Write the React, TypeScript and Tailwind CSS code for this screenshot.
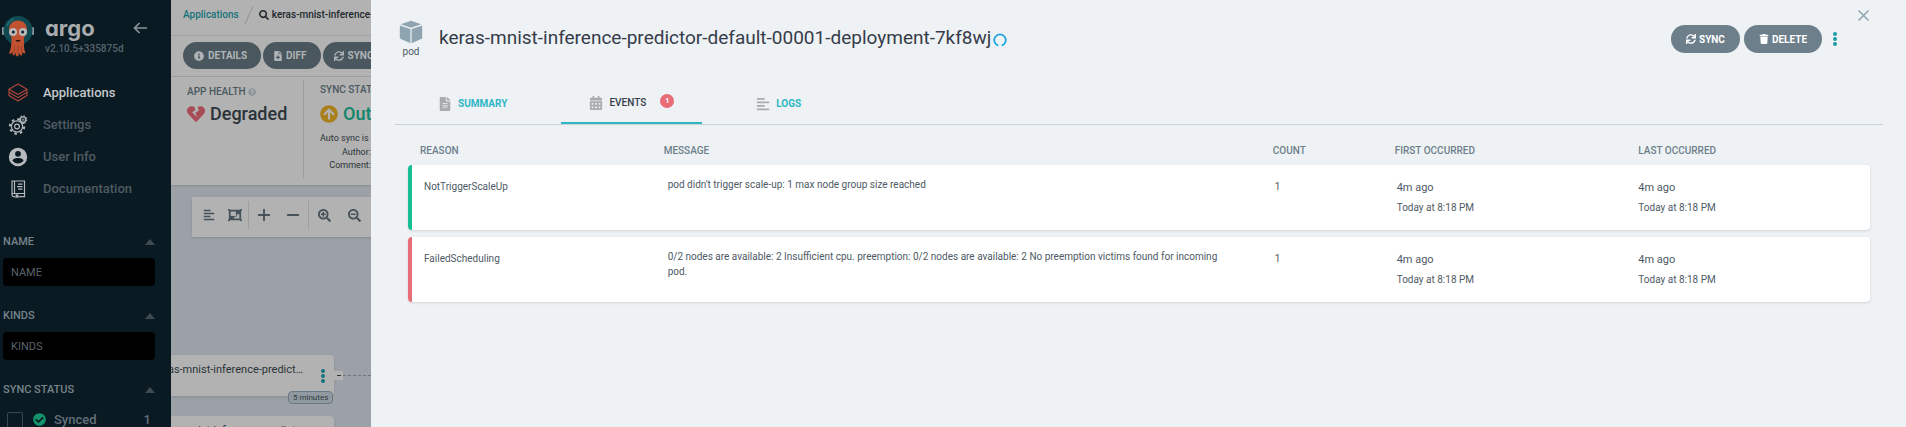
import React from 'react';
import { Minus, Plus } from 'lucide-react';
import {
  FaAlignLeft,
  FaArrowCircleUp,
  FaCalendarAlt,
  FaCheckCircle,
  FaFileAlt,
  FaFileMedical,
  FaHeartBroken,
  FaInfoCircle,
  FaObjectGroup,
  FaQuestionCircle,
  FaSearch,
  FaSearchMinus,
  FaSearchPlus,
  FaSync,
  FaTrash,
} from 'react-icons/fa';

function ArgoLogo() {
  return (
    <svg viewBox="0 0 32 42" className="h-[42px] w-8 shrink-0" aria-hidden="true">
      <rect x="0" y="12" width="2" height="8" rx="1" fill="#8f9aa0" />
      <rect x="30" y="12" width="2" height="8" rx="1" fill="#8f9aa0" />
      <circle cx="16" cy="15.500" r="14.500" fill="#0f4a53" />
      <path d="M5 11a12 12 0 0 1 7-7" stroke="#2a6a72" strokeWidth="1.500" fill="none" />
      <path
        d="M16 5.500c-5.500 0-9 4-9 9 0 4 2.500 6 2.500 10 0 5-.5 9-2.500 14 2 .8 3-.5 3.500-2 0 1.500 0 3 .6 4 1.400 0 2-1.500 2.100-3 .4 1.500.8 3.500 2 4 1.400-.4 1.700-2 2-3.500.4 1.300 1 2.700 2.300 2.700.8-1 .8-2.700.7-4 .8 1.300 2 2.300 3.300 1.300-2-4-1.500-8.500-1.500-13.500 0-4 3-6 3-10 0-5-3.500-9-9-9z"
        fill="#c05232"
      />
      <path d="M12.500 31v6M16 31v8M19.500 31v6" stroke="#8f3a25" strokeWidth=".7" />
      <circle cx="11" cy="17" r="4" fill="#b9b9b9" />
      <circle cx="21" cy="17" r="4" fill="#b9b9b9" />
      <circle cx="11.300" cy="17" r="1.500" fill="#14212b" />
      <circle cx="20.700" cy="17" r="1.500" fill="#14212b" />
      <path d="M13.500 25h5c-.3 2.200-4.700 2.200-5 0z" fill="#2b1514" />
    </svg>
  );
}

function LayersIcon() {
  return (
    <svg viewBox="0 0 20 20" className="size-5" fill="none" stroke="#b5483c" strokeWidth="1.100" strokeLinejoin="round">
      <path d="M10 1 19 6.300 10 11.500 1 6.300z" />
      <path d="M1 6.300v3L10 14.600l9-5.300v-3" />
      <path d="M1 9.300v3.200L10 18l9-5.500V9.300" />
    </svg>
  );
}

function GearsIcon() {
  return (
    <svg viewBox="0 0 20 20" className="size-5" fill="none" stroke="#b4b8ba">
      <circle cx="9" cy="11.500" r="5.600" strokeWidth="1.200" />
      <circle cx="9" cy="11.500" r="7.200" strokeWidth="2" strokeDasharray="2.600 3.055" />
      <circle cx="9" cy="11.500" r="2.400" strokeWidth="1.200" />
      <circle cx="15" cy="4.600" r="2.700" fill="#0a1a22" strokeWidth="1.100" />
      <circle cx="15" cy="4.600" r="3.700" strokeWidth="1.200" strokeDasharray="1.400 1.506" />
      <circle cx="15" cy="4.600" r=".8" strokeWidth=".8" />
    </svg>
  );
}

function UserIcon() {
  return (
    <svg viewBox="0 0 20 20" className="size-5">
      <circle cx="10" cy="10" r="9.200" fill="#b8bbbd" />
      <circle cx="10" cy="6.800" r="2.900" fill="#0a1a22" />
      <path d="M4.400 13.600c1-2 3.300-2.600 5.600-2.600s4.600.6 5.600 2.600a6.700 6.700 0 0 1-11.200 0z" fill="#0a1a22" />
    </svg>
  );
}

function DocsIcon() {
  return (
    <svg viewBox="0 0 20 20" className="size-5" fill="none" stroke="#b4b8ba" strokeWidth="1.200">
      <path d="M4 2h12.500v12.500H5.500A1.500 1.500 0 0 0 4 16z" />
      <path d="M4 16a1.700 1.700 0 0 0 1.500 1.700H7m4 0h5.500v-3.200M6.500 2v12.500" />
      <path d="M7.500 15.500h3v4L9 18.300l-1.500 1.200z" fill="#b4b8ba" stroke="none" />
      <path d="M10 5.200h4.500M9 7.700h5.500M10 10.200h4.500" strokeWidth="1.300" />
    </svg>
  );
}

function PodIcon() {
  return (
    <svg viewBox="0 0 24 24" className="size-6" fill="#8fa4b1">
      <path d="M12 .8 22.300 4.300 12 7.800 1.700 4.300z" />
      <path d="M.8 5.600 11.400 9.100V23.300L.8 18.600z" />
      <path d="M23.200 5.600 12.600 9.100V23.300l10.600-4.700z" />
    </svg>
  );
}

function Dots({ color }: { color: string }) {
  return (
    <svg viewBox="0 0 4 14" className="h-3.5 w-1" fill={color} aria-hidden="true">
      <circle cx="2" cy="2" r="2" />
      <circle cx="2" cy="7" r="2" />
      <circle cx="2" cy="12" r="2" />
    </svg>
  );
}

const navItems = [
  { label: 'Applications', icon: <LayersIcon />, active: true },
  { label: 'Settings', icon: <GearsIcon />, active: false },
  { label: 'User Info', icon: <UserIcon />, active: false },
  { label: 'Documentation', icon: <DocsIcon />, active: false },
];

function FilterHeading({ children }: { children: React.ReactNode }) {
  return (
    <div className="flex h-4 items-center justify-between text-[11px] font-medium text-[#76838b]">
      {children}
      <svg viewBox="0 0 10 6" className="h-1.5 w-2.5" fill="#3f4a52" aria-hidden="true">
        <path d="M5 0 10 6H0z" />
      </svg>
    </div>
  );
}

function Filter({ label }: { label: string }) {
  return (
    <div className="flex flex-col gap-2">
      <FilterHeading>
        <label htmlFor={'filter-' + label}>{label}</label>
      </FilterHeading>
      <input
        id={'filter-' + label}
        placeholder={label}
        className="h-7 w-full rounded bg-black px-2 text-[11px] text-[#5b646b] placeholder:text-[#5b646b]"
      />
    </div>
  );
}

function Sidebar() {
  return (
    <aside className="flex w-[171px] shrink-0 flex-col overflow-hidden bg-[#0a1a22]">
      <div className="flex items-start pt-[15px] pl-0.5">
        <ArgoLogo />
        <div className="flex flex-1 flex-col pl-[11px]">
          <div className="flex items-center justify-between pr-6">
            <span className="font-[Inter] text-[22px] leading-[26px] font-bold text-[#a9acae] [font-feature-settings:'cv11']">
              argo
            </span>
            <button type="button" aria-label="Collapse sidebar">
              <svg viewBox="0 0 14 12" className="h-3 w-3.5" fill="none" stroke="#8c9296" strokeWidth="1.700">
                <path d="M14 6H1.500M6.500 1 1.500 6l5 5" />
              </svg>
            </button>
          </div>
          <span className="pt-0.5 text-[10px] leading-3 font-medium text-[#55636c]">v2.10.5+335875d</span>
        </div>
      </div>
      <nav className="flex flex-col pt-5">
        {navItems.map((item) => (
          <a
            key={item.label}
            href="#"
            className={
              item.active
                ? 'flex h-8 items-center gap-[15px] pl-2 text-[13px] font-medium text-[#c4c8ca]'
                : 'flex h-8 items-center gap-[15px] pl-2 text-[13px] font-medium text-[#4f5b63]'
            }
          >
            {item.icon}
            {item.label}
          </a>
        ))}
      </nav>
      <div className="flex flex-col gap-[22px] pt-[29px] pr-4 pl-[3px]">
        <Filter label="NAME" />
        <Filter label="KINDS" />
        <div className="flex flex-col gap-3">
          <FilterHeading>SYNC STATUS</FilterHeading>
          <label className="flex items-center pr-1 pl-1 text-[13px] font-medium text-[#63707a]">
            <input type="checkbox" className="size-4 appearance-none rounded-xs border border-[#3a464e]" />
            <FaCheckCircle className="mr-2 ml-2.5 size-[13px] text-[#14936b]" />
            <span className="flex-1">Synced</span>
            <span>1</span>
          </label>
        </div>
      </div>
    </aside>
  );
}

function ToolbarButton({ icon, children }: { icon: React.ReactNode; children: React.ReactNode }) {
  return (
    <button
      type="button"
      className="flex h-[27px] shrink-0 items-center gap-1 rounded-full bg-[#4a575f] pr-3.5 pl-[11px] text-[10px] font-bold text-[#b0b4b6]"
    >
      {icon}
      {children}
    </button>
  );
}

function ResourceNode() {
  return (
    <div className="flex h-[41px] w-[163px] shrink-0 items-center justify-between rounded-r bg-[#b2b2b2] pr-[9px] shadow">
      <div className="flex w-[132px] justify-end pb-3 text-[11px] leading-4 text-[#2b3339]">
        keras-mnist-inference-predict…
      </div>
      <button type="button" aria-label="Resource actions">
        <Dots color="#13757c" />
      </button>
    </div>
  );
}

function ApplicationView() {
  return (
    <main className="flex w-[200px] shrink-0 flex-col overflow-hidden bg-[#9ba1a6] whitespace-nowrap">
      <div className="flex h-9 shrink-0 items-center border-b border-[#9fa2a4] bg-[#b2b2b2] pb-1.5 pl-3 text-[10px] font-medium">
        <a href="#" className="text-[#17737b]">
          Applications
        </a>
        <svg viewBox="0 0 10 18" className="mx-1 h-[18px] w-3 shrink-0" stroke="#8d9499" aria-hidden="true">
          <path d="M9 0 1 18" />
        </svg>
        <span className="flex items-center gap-[3px] text-[#22292e]">
          <FaSearch className="size-2.5" />
          keras-mnist-inference-predictor
        </span>
      </div>
      <div className="flex h-[41px] shrink-0 items-center gap-0.5 border-b border-[#9fa2a4] bg-[#b2b2b2] pb-px pl-3">
        <ToolbarButton icon={<FaInfoCircle className="size-2.5" />}>DETAILS</ToolbarButton>
        <ToolbarButton icon={<FaFileMedical className="h-2.5 w-2" />}>DIFF</ToolbarButton>
        <ToolbarButton icon={<FaSync className="size-2.5" />}>SYNC</ToolbarButton>
      </div>
      <div className="flex h-[108px] shrink-0 bg-[#b2b2b2] pt-[3px] pb-1.5 pl-4 shadow">
        <div className="flex w-[117px] shrink-0 flex-col border-r border-[#989ea3] pt-1.5">
          <div className="flex items-center gap-0.5 text-[10px] leading-3 font-medium text-[#4a5860]">
            APP HEALTH <FaQuestionCircle className="size-2 text-[#8b959c]" />
          </div>
          <div className="flex items-center gap-[5px] pt-1 text-[18px] leading-6 font-medium text-[#2b3339]">
            <FaHeartBroken className="size-[18px] text-[#a84c57]" />
            Degraded
          </div>
        </div>
        <div className="flex flex-col pt-1 pl-4">
          <div className="text-[10px] leading-3 font-medium text-[#4a5860]">SYNC STATUS</div>
          <div className="flex items-center gap-[5px] pt-1.5 text-[18px] leading-6 font-medium text-[#12856a]">
            <FaArrowCircleUp className="size-[18px] text-[#aa7f1c]" />
            OutOfSync
          </div>
          <div className="pt-1 text-[9px] leading-4 text-[#2b3339]">Auto sync is enabled.</div>
          <div className="flex w-[51px] flex-col items-end text-[9px] leading-[13px] text-[#2b3339]">
            <span>Author:</span>
            <span>Comment:</span>
          </div>
        </div>
      </div>
      <div className="mt-3 ml-[21px] flex h-10 w-60 shrink-0 items-stretch bg-[#b2b2b2] pt-1 pb-2 text-[#46525a] shadow">
        <div className="flex w-[57px] shrink-0 items-center justify-around border-r border-[#989ea3] pl-1">
          <FaAlignLeft className="size-3" />
          <FaObjectGroup className="size-3.5" />
        </div>
        <div className="flex w-[60px] shrink-0 items-center justify-around border-r border-[#989ea3]">
          <Plus className="size-[18px]" strokeWidth={2.5} />
          <Minus className="size-[18px]" strokeWidth={2.5} />
        </div>
        <div className="flex w-[60px] shrink-0 items-center justify-around">
          <FaSearchPlus className="size-[13px]" />
          <FaSearchMinus className="size-[13px]" />
        </div>
      </div>
      <div className="flex shrink-0 flex-col gap-5 pt-[118px]">
        <div className="relative flex items-center">
          <ResourceNode />
          <button
            type="button"
            aria-label="Collapse children"
            className="flex size-[9px] items-center justify-center bg-[#b2b2b2]"
          >
            <span className="h-px w-1 bg-[#2b3339]" />
          </button>
          <span className="flex-1 border-t border-dashed border-[#6d767c]" />
          <span className="absolute top-9 left-[117px] rounded border border-[#6b7983] bg-[#8f999f] px-1 text-[8px] leading-[11px] text-[#2f3a41]">
            5 minutes
          </span>
        </div>
        <ResourceNode />
      </div>
    </main>
  );
}

const events = [
  {
    reason: 'NotTriggerScaleUp',
    message: "pod didn't trigger scale-up: 1 max node group size reached",
    count: 1,
    warning: false,
  },
  {
    reason: 'FailedScheduling',
    message:
      '0/2 nodes are available: 2 Insufficient cpu. preemption: 0/2 nodes are available: 2 No preemption victims found for incoming pod.',
    count: 1,
    warning: true,
  },
];

function Occurred() {
  return (
    <>
      <div className="text-[11px] leading-5">4m ago</div>
      <div className="text-[10px] leading-5">Today at 8:18 PM</div>
    </>
  );
}

function EventsTable() {
  return (
    <table className="w-full table-fixed border-separate border-spacing-x-0 border-spacing-y-[7px] text-left text-[#4e5a65]">
      <thead>
        <tr className="text-[10px] leading-[14px] text-[#6d7f8b]">
          <th className="w-1/6 pl-3 font-medium">REASON</th>
          <th className="w-5/12 pl-3 font-medium">MESSAGE</th>
          <th className="w-1/12 pl-3 font-medium">COUNT</th>
          <th className="w-1/6 pl-3 font-medium">FIRST OCCURRED</th>
          <th className="w-1/6 pl-3 font-medium">LAST OCCURRED</th>
        </tr>
      </thead>
      <tbody>
        {events.map((event) => (
          <tr key={event.reason} className="h-[65px] rounded bg-white align-top text-[10px] leading-[15px] shadow">
            <td
              className={
                event.warning
                  ? 'rounded-l border-l-4 border-[#e96d76] pt-3.5 pl-3'
                  : 'rounded-l border-l-4 border-[#18be94] pt-3.5 pl-3'
              }
            >
              {event.reason}
            </td>
            <td className="pt-3 pr-8 pl-4">{event.message}</td>
            <td className="pt-3.5 pl-3.5">{event.count}</td>
            <td className="pt-[13px] pl-3.5">
              <Occurred />
            </td>
            <td className="rounded-r pt-[13px] pl-3">
              <Occurred />
            </td>
          </tr>
        ))}
      </tbody>
    </table>
  );
}

function PillButton({ icon, children }: { icon: React.ReactNode; children: React.ReactNode }) {
  return (
    <button
      type="button"
      className="flex h-7 items-center gap-[3px] rounded-full bg-[#6d7f8b] px-[15px] text-[10px] font-bold text-white"
    >
      {icon}
      {children}
    </button>
  );
}

function DetailsPanel() {
  return (
    <section className="flex min-w-0 flex-1 flex-col bg-[#eef2f5] pr-[23px] pl-6">
      <header className="relative flex h-[83px] items-start justify-between pr-[46px]">
        <div className="flex items-start">
          <div className="flex w-8 flex-col items-center pt-5 text-[10px] leading-4 text-[#4e5a65]">
            <PodIcon />
            pod
          </div>
          <h1 className="flex items-center gap-0.5 pt-[26px] pl-3 text-[19px] leading-6 text-[#363c4a]">
            keras-mnist-inference-predictor-default-00001-deployment-7kf8wj
            <svg viewBox="0 0 14 14" className="mt-1 size-3.5" fill="none" stroke="#1fa5e0" strokeWidth="1.800">
              <path d="M5.300 12.600a5.700 5.700 0 1 1 3.400 0" />
            </svg>
          </h1>
        </div>
        <div className="flex items-center gap-1 pt-[25px]">
          <PillButton icon={<FaSync className="size-2.5" />}>SYNC</PillButton>
          <PillButton icon={<FaTrash className="size-2.5" />}>DELETE</PillButton>
          <button type="button" aria-label="More actions" className="pl-[7px]">
            <Dots color="#1a9da8" />
          </button>
        </div>
        <button type="button" aria-label="Close panel" className="absolute top-2.5 right-3.5">
          <svg viewBox="0 0 11 11" className="size-[11px]" stroke="#8fa4b1" strokeWidth="1.500">
            <path d="M.5.5l10 10M10.500.5l-10 10" />
          </svg>
        </button>
      </header>
      <div role="tablist" className="flex h-[42px] gap-[26px] border-b border-[#ccd3d8] pl-[15px] text-[10px]">
        <button role="tab" type="button" className="flex items-center gap-1.5 px-7 font-bold text-[#2fb7c6]">
          <FaFileAlt className="size-3.5 text-[#a9abad]" />
          SUMMARY
        </button>
        <button
          role="tab"
          type="button"
          aria-selected="true"
          className="flex items-center gap-1.5 border-b-2 border-[#2fb7c6] px-7 font-medium text-[#363c4a]"
        >
          <FaCalendarAlt className="size-3.5 text-[#a9abad]" />
          EVENTS
          <span className="mb-1 ml-2 size-3.5 rounded-full bg-[#e96d76] text-[8px] leading-3.5 font-bold text-white">
            1
          </span>
        </button>
        <button role="tab" type="button" className="flex items-center gap-1.5 px-7 font-bold text-[#2fb7c6]">
          <FaAlignLeft className="size-3.5 text-[#a9abad]" />
          LOGS
        </button>
      </div>
      <div className="pt-3 pr-[13px] pl-[13px]">
        <EventsTable />
      </div>
    </section>
  );
}

export default function App() {
  return (
    <div className="flex h-screen overflow-hidden font-[Roboto,sans-serif]">
      <Sidebar />
      <ApplicationView />
      <DetailsPanel />
    </div>
  );
}
